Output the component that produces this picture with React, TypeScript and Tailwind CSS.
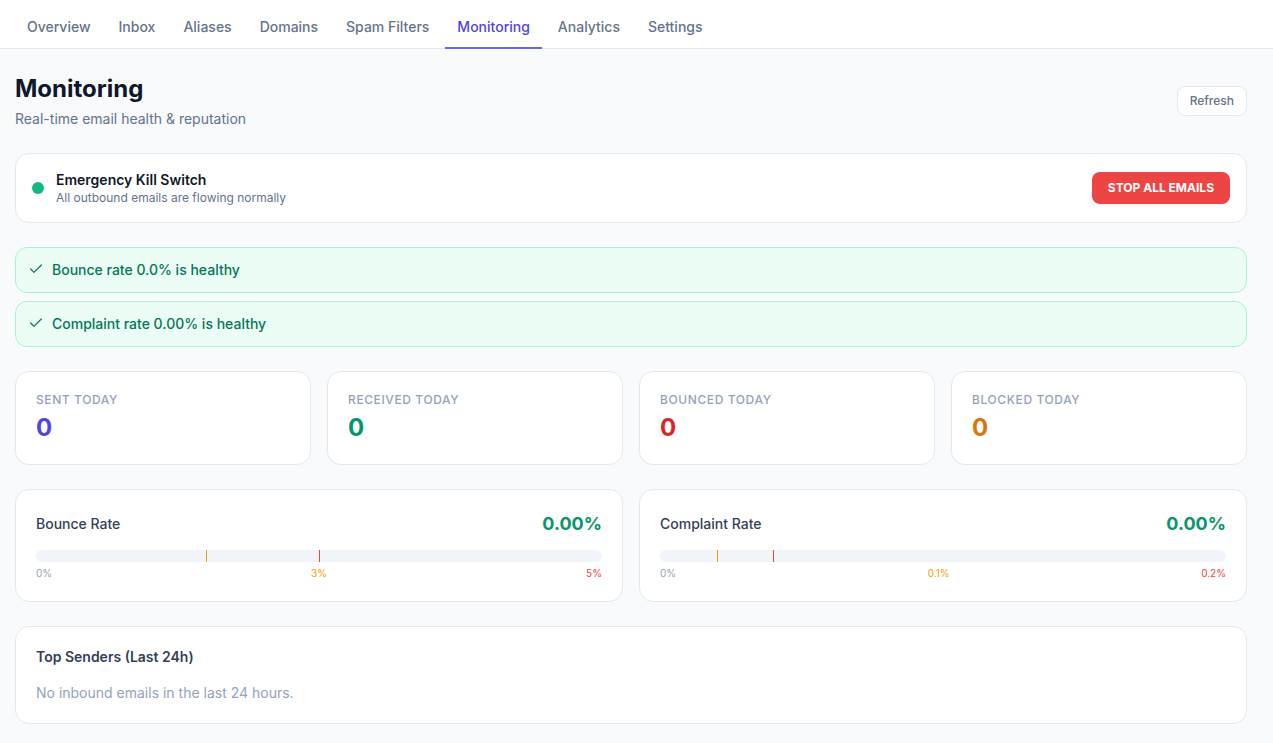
import { Check } from "lucide-react";

const tabs = ["Overview", "Inbox", "Aliases", "Domains", "Spam Filters", "Monitoring", "Analytics", "Settings"];

const stats = [
  { label: "SENT TODAY", color: "text-[#4f46e5]" },
  { label: "RECEIVED TODAY", color: "text-[#059669]" },
  { label: "BOUNCED TODAY", color: "text-[#dc2626]" },
  { label: "BLOCKED TODAY", color: "text-[#d97706]" },
];

function Alert({ text }: { text: string }) {
  return (
    <div className="flex h-[46px] items-center gap-2 rounded-[12px] border border-[#a7f3d0] bg-[#ecfdf5] px-3 pb-[2px] text-[14px] font-medium text-[#047857]">
      <Check className="h-4 w-4" strokeWidth={1.8} />
      <span>{text}</span>
    </div>
  );
}

function RateCard({
  title,
  warnAt,
  dangerAt,
  warn,
  danger,
}: {
  title: string;
  warnAt: string;
  dangerAt: string;
  warn: string;
  danger: string;
}) {
  return (
    <div className="h-[113px] rounded-[14px] border border-[#e2e8f0] bg-white px-5 pt-[22px]">
      <div className="flex items-start justify-between">
        <span className="text-[14px] font-medium leading-[24px] text-[#334155]">{title}</span>
        <span className="text-[18px] font-bold leading-[24px] text-[#059669]">0.00%</span>
      </div>
      <div className="relative mt-[14px] h-3 rounded-full bg-[#f1f5f9]">
        <div className={`absolute top-0 h-3 w-px bg-[#f59e0b] ${warnAt}`} />
        <div className={`absolute top-0 h-3 w-px bg-[#ef4444] ${dangerAt}`} />
      </div>
      <div className="mt-[5px] flex justify-between text-[10px] leading-[12px]">
        <span className="text-[#94a3b8]">0%</span>
        <span className="text-[#f59e0b]">{warn}</span>
        <span className="text-[#ef4444]">{danger}</span>
      </div>
    </div>
  );
}

export default function App() {
  return (
    <div className="min-h-[743px] bg-[#f8fafc] font-['Inter',sans-serif]">
      <nav className="flex h-[49px] gap-1 border-b border-[#e2e8f0] bg-white pl-[15px]">
        {tabs.map((tab) => (
          <div
            key={tab}
            className={
              tab === "Monitoring"
                ? "-mb-px flex h-[49px] items-center border-b-2 border-[#6366f1] px-3 pt-[6px] text-[14px] font-medium text-[#4f46e5]"
                : "-mb-px flex h-[49px] items-center border-b-2 border-transparent px-3 pt-[6px] text-[14px] font-medium text-[#64748b]"
            }
          >
            {tab}
          </div>
        ))}
      </nav>

      <main className="pl-[15px] pr-[26px]">
        <div className="flex h-[104px] items-start justify-between pt-[25px]">
          <div>
            <h1 className="text-[24px] font-bold leading-[30px] text-[#0f172a]">Monitoring</h1>
            <p className="mt-[4px] text-[14px] leading-[22px] text-[#64748b]">Real-time email health &amp; reputation</p>
          </div>
          <button
            type="button"
            className="mt-[12px] h-[30px] rounded-[8px] border border-[#e2e8f0] bg-white px-3 text-[12px] font-medium text-[#64748b]"
          >
            Refresh
          </button>
        </div>

        <div className="flex h-[70px] items-center justify-between rounded-[14px] border border-[#e2e8f0] bg-white pl-4 pr-4">
          <div className="flex items-center gap-3">
            <span className="h-3 w-3 rounded-full bg-[#10b981]" />
            <div className="pt-[2px]">
              <div className="text-[14px] font-semibold leading-[18px] text-[#0f172a]">Emergency Kill Switch</div>
              <div className="text-[12px] leading-[18px] text-[#64748b]">All outbound emails are flowing normally</div>
            </div>
          </div>
          <button
            type="button"
            className="h-[32px] rounded-[8px] bg-[#ef4444] px-4 text-[12px] font-bold text-white"
          >
            STOP ALL EMAILS
          </button>
        </div>

        <div className="mt-6 flex flex-col gap-2">
          <Alert text="Bounce rate 0.0% is healthy" />
          <Alert text="Complaint rate 0.00% is healthy" />
        </div>

        <div className="mt-6 grid grid-cols-4 gap-4">
          {stats.map((stat) => (
            <div key={stat.label} className="h-[94px] rounded-[14px] border border-[#e2e8f0] bg-white px-5 pt-[20px]">
              <div className="text-[12px] font-medium leading-[15px] tracking-[0.6px] text-[#94a3b8]">{stat.label}</div>
              <div className={`mt-[6px] text-[24px] font-bold leading-[30px] ${stat.color}`}>0</div>
            </div>
          ))}
        </div>

        <div className="mt-6 grid grid-cols-2 gap-4">
          <RateCard title="Bounce Rate" warnAt="left-[30%]" dangerAt="left-1/2" warn="3%" danger="5%" />
          <RateCard title="Complaint Rate" warnAt="left-[10%]" dangerAt="left-[20%]" warn="0.1%" danger="0.2%" />
        </div>

        <div className="mt-6 h-[98px] rounded-[14px] border border-[#e2e8f0] bg-white px-5 pt-[20px]">
          <h3 className="text-[14px] font-semibold leading-[20px] text-[#334155]">Top Senders (Last 24h)</h3>
          <p className="mt-[16px] text-[14px] leading-[20px] text-[#94a3b8]">No inbound emails in the last 24 hours.</p>
        </div>
      </main>
    </div>
  );
}
